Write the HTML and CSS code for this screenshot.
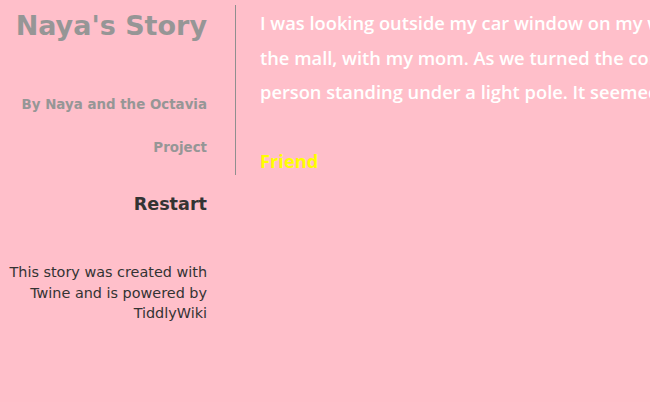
FILE: index.html
```html
<!DOCTYPE html>
<html>
<head>
<meta charset="utf-8">
<link rel="stylesheet" href="styles.css">
</head>
<body>
<div class="page">
  <aside class="sidebar">
    <h1 class="title">Naya's Story</h1>
    <p class="subtitle">By Naya and the Octavia<br>Project</p>
    <a class="restart" href="#">Restart</a>
    <p class="credits">This story was created with<br>Twine and is powered by<br>TiddlyWiki</p>
  </aside>
  <main class="passage">
    <p class="body-text">
      <span class="line">I was looking outside my car window on my way to</span><br>
      <span class="line">the mall, with my mom. As we turned the corner, I saw a</span><br>
      <span class="line">person standing under a light pole. It seemed strange.</span><br>
      <br>
      <a class="link" href="#">Friend</a>
    </p>
  </main>
</div>
</body>
</html>
```
FILE: styles.css
```css
html, body {
  margin: 0;
  padding: 0;
  background: #ffbfca;
  overflow: hidden;
}
.page {
  display: flex;
  align-items: flex-start;
  width: 650px;
  height: 402px;
  overflow: hidden;
}
.sidebar {
  flex: 0 0 207px;
  text-align: right;
  font-family: "DejaVu Sans", Verdana, sans-serif;
}
.title {
  margin: 0;
  padding-top: 6px;
  font-size: 27px;
  line-height: 40px;
  font-weight: bold;
  color: #969696;
}
.subtitle {
  margin: 37px 0 0;
  font-size: 13.4px;
  line-height: 43px;
  font-weight: bold;
  color: #969696;
}
.restart {
  display: block;
  margin-top: 23px;
  font-size: 17.6px;
  line-height: 24px;
  font-weight: bold;
  color: #333;
  text-decoration: none;
}
.credits {
  margin: 46px 0 0;
  font-size: 14.4px;
  line-height: 20.5px;
  color: #333;
}
.passage {
  flex: 0 0 auto;
  margin: 5px 0 0 28px;
  padding-left: 24px;
  border-left: 1px solid #8f8f8f;
  height: 170px;
  white-space: nowrap;
  font-family: "Open Sans", "Comic Sans MS", sans-serif;
}
.body-text {
  margin: 0;
  padding-top: 1px;
  font-size: 18.3px;
  font-weight: 600;
  line-height: 34.5px;
  color: #fff;
}
.link {
  font-weight: 700;
  color: #ffff00;
  text-decoration: none;
}
```
